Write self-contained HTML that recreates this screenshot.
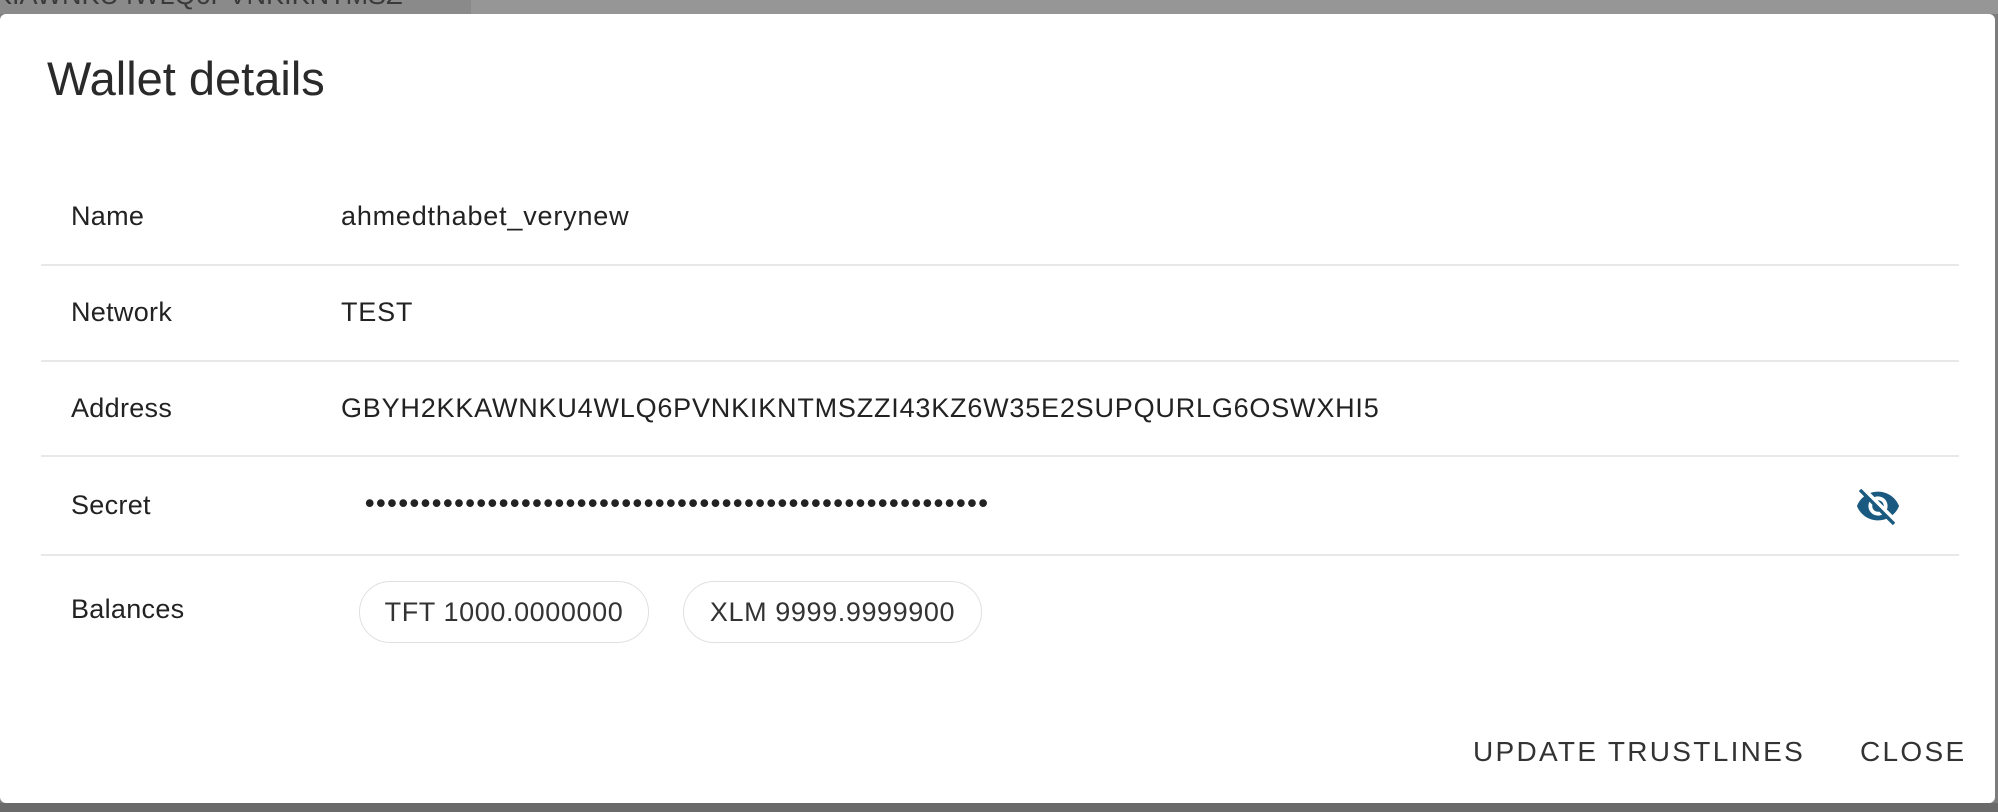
<!DOCTYPE html>
<html><head><meta charset="utf-8"><style>
html,body{margin:0;padding:0;width:1998px;height:812px;overflow:hidden;background:#7d7d7d;font-family:"Liberation Sans",Arial,sans-serif;}
.top1{position:absolute;left:0;top:0;width:471px;height:14px;background:#8a8a8a;overflow:hidden}
.top2{position:absolute;left:471px;top:0;width:1527px;height:14px;background:#969696}
.toptext{position:absolute;left:-6px;top:-20px;font-size:27px;color:#3a3a3a;white-space:nowrap}
.bot{position:absolute;left:0;top:803px;width:1998px;height:9px;background:#6a6a6a}
.dlg{position:absolute;left:0;top:14px;width:1995px;height:789px;background:#fff;border-radius:6px;color:#222}
.title{position:absolute;left:47px;top:37px;font-size:47px;color:#2a2a2a}
.row{position:absolute;left:41px;width:1918px;border-bottom:2px solid #e8e8e8}
.lbl{position:absolute;left:71px;font-size:27px;color:#222;letter-spacing:0.3px}
.val{position:absolute;left:341px;font-size:27px;color:#222;white-space:nowrap;letter-spacing:0.8px}
.chip{position:absolute;top:567px;height:60px;border:1.5px solid #e0e0e0;border-radius:31px;font-size:27px;line-height:60px;text-align:center;color:#333;letter-spacing:0.6px}
.btn{position:absolute;top:722px;font-size:28px;letter-spacing:2.3px;color:#333;white-space:nowrap}
</style></head><body>
<div class="top1"><div class="toptext">KIAWNKU4WLQ6PVNKIKNTMSZ</div></div>
<div class="top2"></div>
<div class="bot"></div>
<div class="dlg">
<div class="title">Wallet details</div>
<div class="row" style="top:250px"></div>
<div class="row" style="top:346px"></div>
<div class="row" style="top:441px"></div>
<div class="row" style="top:540px"></div>
<div class="lbl" style="top:187px">Name</div><div class="val" style="top:187px">ahmedthabet_verynew</div>
<div class="lbl" style="top:283px">Network</div><div class="val" style="top:283px">TEST</div>
<div class="lbl" style="top:379px">Address</div><div class="val" style="top:379px">GBYH2KKAWNKU4WLQ6PVNKIKNTMSZZI43KZ6W35E2SUPQURLG6OSWXHI5</div>
<div class="lbl" style="top:476px">Secret</div><div class="val" style="top:474px;left:365px;letter-spacing:1.7px;font-weight:bold">••••••••••••••••••••••••••••••••••••••••••••••••••••••••</div>
<svg style="position:absolute;left:1855px;top:469px" width="46" height="46" viewBox="0 0 24 24"><path fill="#1b5a80" d="M12 7c2.76 0 5 2.24 5 5 0 .65-.13 1.26-.36 1.830l2.92 2.92c1.51-1.26 2.7-2.89 3.43-4.75-1.73-4.390-6-7.5-11-7.5-1.4 0-2.74.25-3.98.7l2.16 2.16C10.74 7.13 11.35 7 12 7zM2 4.27l2.28 2.28.46.46C3.08 8.3 1.78 10.02 1 12c1.73 4.39 6 7.5 11 7.5 1.55 0 3.03-.3 4.38-.84l.42.42L19.73 22 21 20.73 3.27 3 2 4.27zM7.53 9.8l1.55 1.55c-.05.21-.08.43-.08.65 0 1.66 1.34 3 3 3 .22 0 .44-.03.65-.08l1.55 1.55c-.67.33-1.41.53-2.2.53-2.76 0-5-2.24-5-5 0-.79.2-1.530.53-2.2zm4.31-.78l3.15 3.15.02-.16c0-1.66-1.34-3-3-3l-.17.01z"/></svg>
<div class="lbl" style="top:580px">Balances</div>
<div class="chip" style="left:359px;width:288px">TFT 1000.0000000</div>
<div class="chip" style="left:683px;width:297px">XLM 9999.9999900</div>
<div class="btn" style="left:1473px">UPDATE TRUSTLINES</div>
<div class="btn" style="left:1860px">CLOSE</div>
</div>
</body></html>
